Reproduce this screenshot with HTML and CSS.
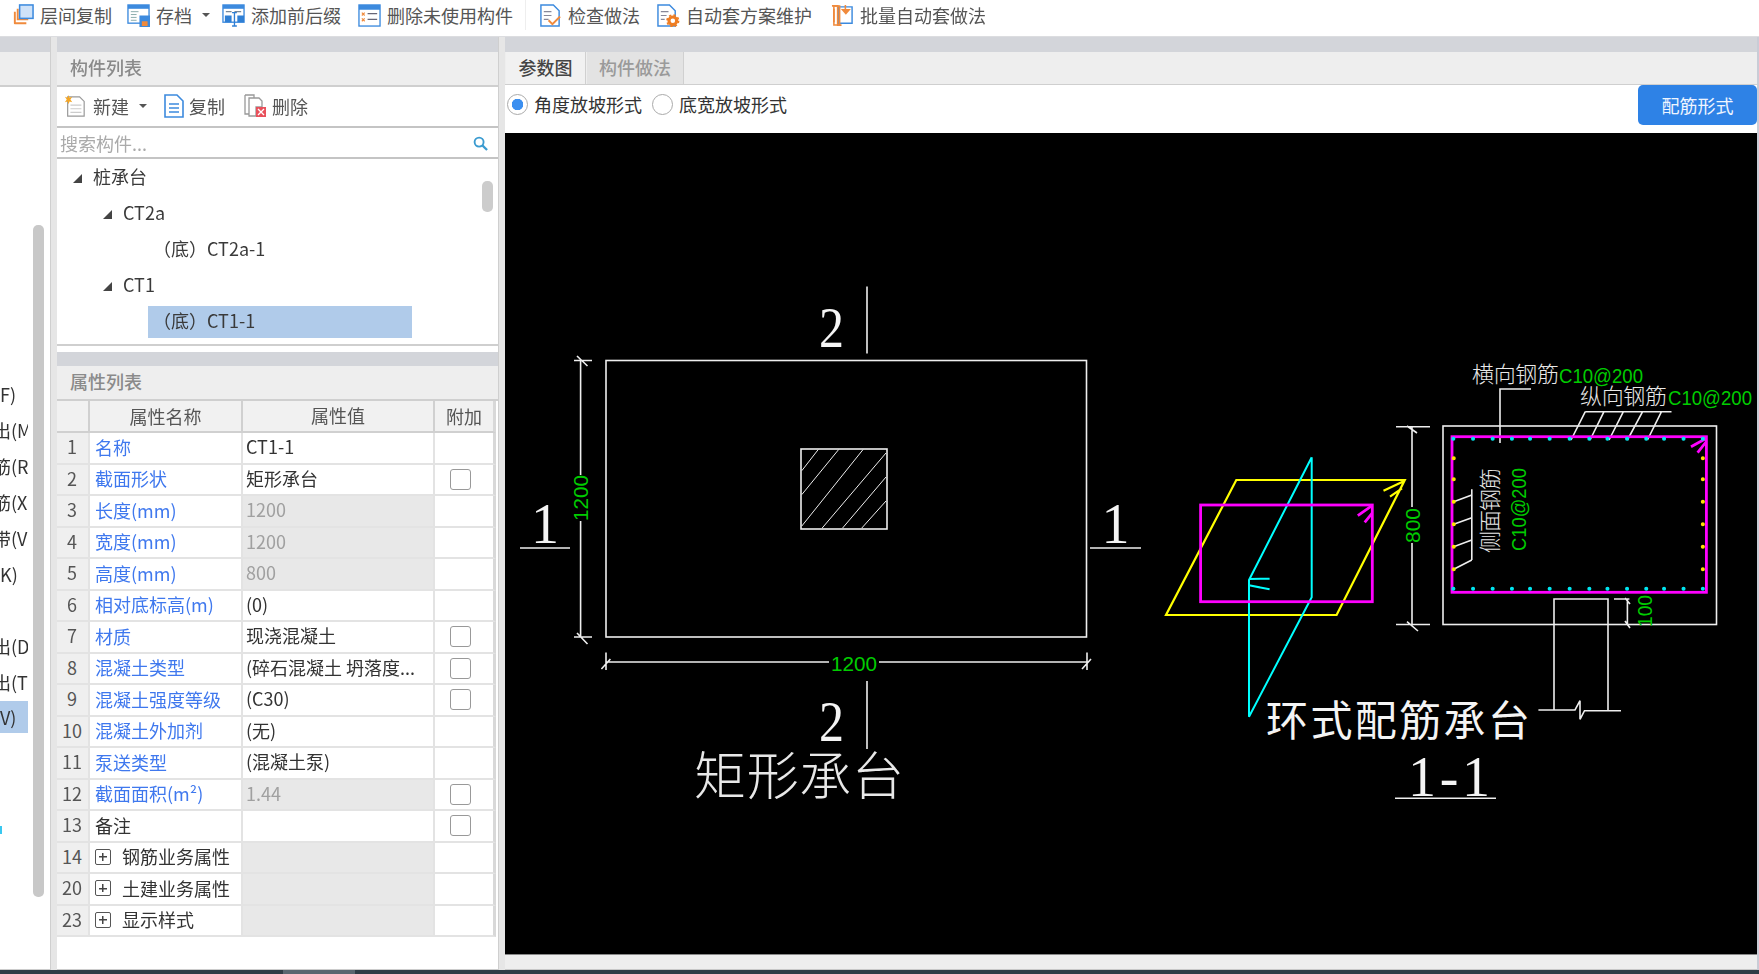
FILE: index.html
```html
<!DOCTYPE html>
<html lang="zh-CN">
<head>
<meta charset="utf-8">
<title>构件属性</title>
<link rel="stylesheet" href="styles.css">
</head>
<body>
<div class="app">
  <header class="topbar">
    <div class="tool t1">
      <svg class="ti" viewBox="0 0 24 24"><path d="M5 8H3v12a1 1 0 0 0 1 1h12v-2H5z M8 5H6v12h12v-2H8z" fill="#f08a3c"/><rect x="9" y="1" width="14" height="14" fill="#cfe2f8" stroke="#3c8ade" stroke-width="1.6"/></svg>
      <span>层间复制</span>
    </div>
    <div class="tool t2">
      <svg class="ti" viewBox="0 0 24 24"><rect x="1" y="1" width="22" height="19" fill="#fff" stroke="#3c8ade" stroke-width="1.4"/><rect x="1" y="1" width="22" height="4" fill="#3c8ade"/><path d="M4 8h8M4 11h6M4 14h6M4 17h6" stroke="#8aa" stroke-width="1"/><rect x="13" y="12" width="11" height="12" fill="#3c8ade"/><rect x="15.500" y="18" width="6" height="5" fill="#f08a3c"/></svg>
      <span>存档</span><i class="caret"></i>
    </div>
    <div class="tool t3">
      <svg class="ti" viewBox="0 0 24 24"><rect x="1" y="1" width="22" height="18" fill="#fff" stroke="#3c8ade" stroke-width="1.4"/><rect x="1" y="1" width="22" height="4" fill="#3c8ade"/><path d="M4 8h6M13 8h7" stroke="#789" stroke-width="1.2"/><rect x="3" y="12" width="7" height="7" fill="#2f7fd4"/><rect x="16" y="12" width="7" height="7" fill="#2f7fd4"/><path d="M13 9v14M10.500 9h5M10.500 23h5" stroke="#2f7fd4" stroke-width="1.4" fill="none"/></svg>
      <span>添加前后缀</span>
    </div>
    <div class="tool t4">
      <svg class="ti" viewBox="0 0 24 24"><rect x="1" y="1" width="22" height="22" fill="#fff" stroke="#3c8ade" stroke-width="1.4"/><rect x="1" y="1" width="22" height="5" fill="#3c8ade"/><path d="M4 9l3 3m0-3l-3 3M4 15l3 3m0-3l-3 3" stroke="#f08a3c" stroke-width="1.2"/><path d="M10 10h10M10 16h10" stroke="#667" stroke-width="1.2"/></svg>
      <span>删除未使用构件</span>
    </div>
    <b class="tool-sep"></b>
    <div class="tool t5">
      <svg class="ti" viewBox="0 0 24 24"><path d="M2 1h13l6 6v16H2z" fill="#fff" stroke="#3c8ade" stroke-width="1.5"/><path d="M5 8h8M5 12h8M5 16h5" stroke="#889" stroke-width="1.2"/><path d="M10 17l4 4 8-8" fill="none" stroke="#f08a3c" stroke-width="2"/></svg>
      <span>检查做法</span>
    </div>
    <div class="tool t6">
      <svg class="ti" viewBox="0 0 24 24"><path d="M1 1h12l6 6v16H1z" fill="#fff" stroke="#3c8ade" stroke-width="1.5"/><path d="M4 8h8M4 12h6M4 16h4" stroke="#889" stroke-width="1.2"/><circle cx="16.500" cy="17.500" r="4" fill="#fff" stroke="#ef7d22" stroke-width="3.200"/><circle cx="16.500" cy="17.500" r="6" fill="none" stroke="#ef7d22" stroke-width="1.800" stroke-dasharray="2.400 2.300"/></svg>
      <span>自动套方案维护</span>
    </div>
    <div class="tool t7">
      <svg class="ti" viewBox="0 0 24 24"><path d="M8 3h14v17H8z" fill="#fff" stroke="#3c8ade" stroke-width="1.500"/><path d="M1 2h6v20h4M3 5v14" fill="none" stroke="#f08a3c" stroke-width="1.800"/><path d="M3 2h6v20H3z" fill="none" stroke="#f08a3c" stroke-width="1.600"/><path d="M15 1v8M12 6l3.500 4L19 6z" fill="#f08a3c" stroke="#f08a3c" stroke-width="1.600"/></svg>
      <span>批量自动套做法</span>
    </div>
  </header>

  <div class="workspace">
    <aside class="nav">
      <div class="strip"></div>
      <div class="nav-head"></div>
      <div class="nav-body">
        <div class="nav-rows">
          <div class="nav-row"><span>F)</span></div>
          <div class="nav-row"><span class="cut">出(M</span></div>
          <div class="nav-row"><span class="cut">筋(R</span></div>
          <div class="nav-row"><span class="cut">筋(X</span></div>
          <div class="nav-row"><span class="cut">带(V</span></div>
          <div class="nav-row"><span>K)</span></div>
          <div class="nav-row"></div>
          <div class="nav-row"><span class="cut">出(D</span></div>
          <div class="nav-row"><span class="cut">出(T</span></div>
          <div class="nav-row nav-sel"><span>V)</span></div>
        </div>
        <div class="nav-thumb"></div>
        <i class="nav-dot"></i>
      </div>
    </aside>
    <div class="gutter"></div>

    <section class="mid">
      <div class="strip"></div>
      <h2 class="panel-title">构件列表</h2>
      <div class="list-tools">
        <svg class="ti-s new" viewBox="0 0 24 24"><path d="M4 2h13l5 5v16H4z" fill="#fff" stroke="#999" stroke-width="1.300"/><path d="M7 11h12M7 15h12M7 19h12" stroke="#ccc" stroke-width="1.200"/><path d="M5 0l1 3 3-1-2 3 2 3-3-1-1 3-1-3-3 1 2-3-2-3 3 1z" fill="#f5a623"/></svg>
        <span class="lt-new">新建</span><i class="caret c-new"></i>
        <svg class="ti-s copy" viewBox="0 0 20 24"><path d="M1 1h12l6 6v16H1z" fill="#fff" stroke="#3c8ade" stroke-width="1.600"/><path d="M5 10h10M5 14h10M5 18h10" stroke="#3c8ade" stroke-width="1.400"/></svg>
        <span class="lt-copy">复制</span>
        <svg class="ti-s del" viewBox="0 0 22 24"><path d="M1 1h9v3M1 1v19h4" fill="none" stroke="#999" stroke-width="1.300"/><path d="M5 4h10l3 3v6H12v9H5z" fill="#fff" stroke="#999" stroke-width="1.300"/><rect x="12" y="13" width="10" height="10" fill="#e8505b"/><path d="M14 15l6 6m0-6l-6 6" stroke="#fff" stroke-width="1.300"/></svg>
        <span class="lt-del">删除</span>
      </div>
      <div class="search">
        <span>搜索构件...</span>
        <svg class="search-ico" viewBox="0 0 16 16"><circle cx="6.500" cy="6.500" r="4.800" fill="none" stroke="#3b9bd0" stroke-width="2"/><path d="M10 10l5 5" stroke="#3b9bd0" stroke-width="2.400"/></svg>
      </div>
      <div class="tree">
        <div class="tree-row lv1"><i class="tri"></i>桩承台</div>
        <div class="tree-row lv2"><i class="tri"></i>CT2a</div>
        <div class="tree-row lv3"><span>（底）CT2a-1</span></div>
        <div class="tree-row lv2"><i class="tri"></i>CT1</div>
        <div class="tree-row lv3 sel"><span>（底）CT1-1</span></div>
        <div class="tree-thumb"></div>
      </div>
      <div class="strip strip-mid"></div>
      <h2 class="panel-title">属性列表</h2>
      <div class="props">
        <div class="pr head"><div class="n"></div><div class="k">属性名称</div><div class="v">属性值</div><div class="a">附加</div></div>
        <div class="pr"><div class="n">1</div><div class="k blue">名称</div><div class="v">CT1-1</div><div class="a"></div></div>
        <div class="pr"><div class="n">2</div><div class="k blue">截面形状</div><div class="v">矩形承台</div><div class="a"><i class="cb"></i></div></div>
        <div class="pr"><div class="n">3</div><div class="k blue">长度(mm)</div><div class="v off">1200</div><div class="a"></div></div>
        <div class="pr"><div class="n">4</div><div class="k blue">宽度(mm)</div><div class="v off">1200</div><div class="a"></div></div>
        <div class="pr"><div class="n">5</div><div class="k blue">高度(mm)</div><div class="v off">800</div><div class="a"></div></div>
        <div class="pr"><div class="n">6</div><div class="k blue">相对底标高(m)</div><div class="v">(0)</div><div class="a"></div></div>
        <div class="pr"><div class="n">7</div><div class="k blue">材质</div><div class="v">现浇混凝土</div><div class="a"><i class="cb"></i></div></div>
        <div class="pr"><div class="n">8</div><div class="k blue">混凝土类型</div><div class="v">(碎石混凝土 坍落度...</div><div class="a"><i class="cb"></i></div></div>
        <div class="pr"><div class="n">9</div><div class="k blue">混凝土强度等级</div><div class="v">(C30)</div><div class="a"><i class="cb"></i></div></div>
        <div class="pr"><div class="n">10</div><div class="k blue">混凝土外加剂</div><div class="v">(无)</div><div class="a"></div></div>
        <div class="pr"><div class="n">11</div><div class="k blue">泵送类型</div><div class="v">(混凝土泵)</div><div class="a"></div></div>
        <div class="pr"><div class="n">12</div><div class="k blue">截面面积(m²)</div><div class="v off">1.44</div><div class="a"><i class="cb"></i></div></div>
        <div class="pr"><div class="n">13</div><div class="k">备注</div><div class="v"></div><div class="a"><i class="cb"></i></div></div>
        <div class="pr"><div class="n">14</div><div class="k"><i class="plus"></i>钢筋业务属性</div><div class="v off"></div><div class="a"></div></div>
        <div class="pr"><div class="n">20</div><div class="k"><i class="plus"></i>土建业务属性</div><div class="v off"></div><div class="a"></div></div>
        <div class="pr"><div class="n">23</div><div class="k"><i class="plus"></i>显示样式</div><div class="v off"></div><div class="a"></div></div>
      </div>
    </section>
    <div class="gutter"></div>

    <main class="view">
      <div class="strip"></div>
      <div class="tabs">
        <div class="tab on">参数图</div>
        <div class="tab">构件做法</div>
      </div>
      <div class="opts">
        <label class="radio"><i class="dot on"></i>角度放坡形式</label>
        <label class="radio"><i class="dot"></i>底宽放坡形式</label>
        <button class="btn">配筋形式</button>
      </div>
      <svg class="cad" viewBox="505 133 1252 821">
        <g class="w">
          <rect x="606" y="360.500" width="480.500" height="276.500"/>
          <rect x="801" y="449" width="86" height="80"/>
          <g class="thin">
            <path d="M801.800 470.700L818.200 449.600M801.800 494.600L838.600 449.600M801.800 526L863 449.600M822.200 528L886 453M842.600 528L886 477M861.800 528L886 501"/>
          </g>
          <path d="M867 286.500V353.500M867 681V749M520 548H570M1090 548H1141"/>
          <path d="M580.600 360.500V475M580.600 521V637M574 360.500H592M574 637H592M577 356L587.500 366M577 633L587.500 644"/>
          <path d="M606 662H829M879 662H1087M606 652.500V670M1087 652.500V670M601.400 669L610.400 659M1082 669L1091 659"/>
          <rect x="1443" y="426" width="273.500" height="198.500"/>
          <path d="M1412 426.700V507M1412 543V624.500M1396 426.700H1430M1396 624.500H1430M1407 426L1417 433M1407 621.700L1418 631"/>
          <path d="M1500 443V389H1531M1585.300 411.700H1671.500M1585.300 411.700L1571 440M1604 411.700L1590 440M1623.400 411.700L1609 440M1642.600 411.700L1627.400 440M1661.500 411.700L1647.400 440"/>
          <path d="M1471.800 489.300V560M1471.800 495L1453.700 501.700M1471.800 517.700L1453.700 524.300M1471.800 540L1453.700 546.700M1471.800 560L1453.700 569.300"/>
          <path d="M1554 710V599H1608V710M1538.400 710H1575L1580 700.700V719.300L1584.500 710.700H1621"/>
          <path d="M1614 599H1629.400M1627.400 599V625M1625 598L1630 604M1625 621L1630 628"/>
          <path d="M1395 798.300H1496"/>
        </g>
        <g class="yellow">
          <path d="M1236.300 480H1404.800L1336.600 615H1166ZM1383.500 490.700L1404.800 480.700M1390 496.700L1402 488.300"/>
        </g>
        <g class="cyan">
          <path d="M1311.700 457.300V597.300L1249 716.700V580L1311.700 457.300M1249 579L1269.600 578.700M1249 585.300L1269.600 589.300"/>
        </g>
        <g class="magenta">
          <rect x="1200.600" y="505" width="171.700" height="96.700"/>
          <path d="M1357.800 515.700L1372 505.700M1364.700 522.300L1372 513.300"/>
          <rect x="1452" y="436.700" width="254.400" height="155.600"/>
          <path d="M1691 446.700L1706 438.500M1697.600 452.700L1706 442"/>
        </g>
        <g class="rebar-c">
          <path d="M1453.300 438.700h.1M1473 438.700h.1M1492.600 438.700h.1M1511.900 438.700h.1M1530 438.700h.1M1549.600 438.700h.1M1569.600 438.700h.1M1589.300 438.700h.1M1607.400 438.700h.1M1627 438.700h.1M1646.200 438.700h.1M1664 438.700h.1M1683.500 438.700h.1M1702.800 438.700h.1M1453.300 588.700h.1M1473 588.700h.1M1492.600 588.700h.1M1511.900 588.700h.1M1530 588.700h.1M1549.600 588.700h.1M1569.600 588.700h.1M1589.300 588.700h.1M1607.400 588.700h.1M1627 588.700h.1M1646.200 588.700h.1M1664 588.700h.1M1683.500 588.700h.1M1702.800 588.700h.1"/>
        </g>
        <g class="rebar-y">
          <path d="M1453.700 458.300h.1M1453.700 479.300h.1M1453.700 501.700h.1M1453.700 524.300h.1M1453.700 546.700h.1M1453.700 569.300h.1M1702.800 458.300h.1M1702.800 479.300h.1M1702.800 501.700h.1M1702.800 524.300h.1M1702.800 546.700h.1M1702.800 569.300h.1"/>
        </g>

        <text class="num" x="819" y="347" textLength="25" lengthAdjust="spacingAndGlyphs">2</text>
        <text class="num" x="819" y="741" textLength="25" lengthAdjust="spacingAndGlyphs">2</text>
        <text class="num" x="531" y="543">1</text>
        <text class="num" x="1101.500" y="543">1</text>
        <text class="num" x="1408" y="796" textLength="82">1-1</text>

        <text class="g" x="831" y="670.500" textLength="46" lengthAdjust="spacingAndGlyphs">1200</text>
        <text class="g" transform="translate(588 521) rotate(-90)" textLength="46" lengthAdjust="spacingAndGlyphs">1200</text>
        <text class="g" transform="translate(1420 543) rotate(-90)" textLength="35" lengthAdjust="spacingAndGlyphs">800</text>
        <text class="g" transform="translate(1652 627) rotate(-90)" textLength="32" lengthAdjust="spacingAndGlyphs">100</text>
        <text class="g" x="1559" y="383" textLength="84" lengthAdjust="spacingAndGlyphs">C10@200</text>
        <text class="g" x="1668" y="405" textLength="84" lengthAdjust="spacingAndGlyphs">C10@200</text>
        <text class="g" transform="translate(1526 551) rotate(-90)" textLength="83" lengthAdjust="spacingAndGlyphs">C10@200</text>

        <text class="cn" x="1472" y="382" textLength="87">横向钢筋</text>
        <text class="cn" x="1580" y="404" textLength="87">纵向钢筋</text>
        <text class="cn" transform="translate(1498 553) rotate(-90)" textLength="85">侧面钢筋</text>
        <text class="cn title" x="694" y="795" textLength="210">矩形承台</text>
        <text class="cn title2" x="1266" y="736" textLength="264">环式配筋承台</text>
      </svg>
      <div class="view-foot"></div>
    </main>
    <div class="edge"></div>
  </div>

  <footer class="task"><i></i></footer>
</div>
</body>
</html>
```
FILE: styles.css
```css
* { box-sizing: border-box; }
html, body { margin: 0; padding: 0; }
body {
  width: 1759px;
  height: 974px;
  overflow: hidden;
  background: #fff;
  font-family: "Noto Sans CJK SC", "Noto Sans", sans-serif;
  font-size: 18px;
  color: #3a3a3a;
}
i { display: block; font-style: normal; }
.app { display: flex; flex-direction: column; height: 974px; filter: blur(0.5px); }

/* top bar */
.topbar {
  height: 37px;
  flex: none;
  display: flex;
  align-items: flex-start;
  background: #fff;
  border-bottom: 1px solid #dcdde0;
  color: #555;
  padding-left: 11px;
}
.tool { display: flex; align-items: center; height: 30px; line-height: 30px; white-space: nowrap; }
.tool span { display: block; }
.ti { width: 23px; height: 23px; flex: none; margin-right: 6px; }
.t2 { margin-left: 15px; }
.t3 { margin-left: 12px; }
.t4 { margin-left: 17px; }
.tool-sep { width: 1px; height: 30px; margin: 0 13px 0 12px; background: #eee; }
.t6 { margin-left: 17px; }
.t7 { margin-left: 19px; }
.caret {
  width: 0; height: 0;
  border: 4px solid transparent;
  border-top: 4.500px solid #555;
  border-bottom: 0;
}
.t2 .caret { margin-left: 10px; margin-right: 0; }

/* columns */
.workspace { flex: 1; display: flex; min-height: 0; }
.strip { height: 15px; background: #d3d5da; flex: none; }
.gutter { width: 7px; flex: none; background: #e6e6e6; border-left: 1px solid #cfcfcf; }
.edge { width: 2px; flex: none; background: #c9ccd6; }

.nav { width: 50px; flex: none; display: flex; flex-direction: column; }
.nav-head { height: 35px; flex: none; background: #eee; border-bottom: 2px solid #cfcfcf; }
.nav-body { flex: 1; position: relative; background: #fff; border-bottom: 1px solid #ccc; }
.nav-rows { padding-top: 290px; width: 28px; }
.nav-row { height: 36px; line-height: 35px; overflow: hidden; white-space: nowrap; font-size: 18px; color: #333; }
.nav-row .cut { display: block; margin-left: -7px; }
.nav-sel { height: 32px; margin-top: 0; background: #b0cbea; line-height: 32px; }
.nav-thumb { position: absolute; left: 33px; top: 138px; width: 11px; height: 672px; border-radius: 5px; background: #c8c8c8; }
.nav-dot { position: absolute; left: 0; top: 739px; width: 2px; height: 8px; background: #39c8f0; }

/* middle */
.mid { width: 441px; flex: none; display: flex; flex-direction: column; background: #fff; border-bottom: 1px solid #ccc; }
.panel-title {
  margin: 0;
  height: 35px;
  flex: none;
  padding-left: 13px;
  background: #eee;
  border-bottom: 2px solid #cfcfcf;
  font-size: 18px;
  font-weight: 500;
  line-height: 31px;
  color: #8a8a8a;
}
.list-tools {
  height: 41px;
  flex: none;
  display: flex;
  align-items: center;
  padding: 0 0 2px 7px;
  border-bottom: 2px solid #c4c4c4;
  color: #555;
}
.ti-s { width: 22px; height: 24px; flex: none; }
.lt-new { margin-left: 7px; }
.c-new { margin-left: 10px; }
.copy { width: 20px; margin-left: 17px; }
.lt-copy { margin-left: 5px; }
.del { margin-left: 19px; }
.lt-del { margin-left: 6px; }
.search {
  height: 30px;
  flex: none;
  display: flex;
  align-items: center;
  justify-content: space-between;
  padding: 0 10px 0 3px;
  border-bottom: 2px solid #c4c4c4;
  color: #aaa;
  margin-top: 1px;
}
.search-ico { width: 15px; height: 15px; }
.tree { position: relative; height: 187px; flex: none; padding-top: 1px; border-bottom: 2px solid #cfcfcf; color: #3a3a3a; }
.tree-row { height: 36px; line-height: 32px; display: flex; align-items: flex-start; white-space: nowrap; }
.tri {
  width: 0; height: 0;
  margin: 13.5px 11px 0 0;
  border-left: 9px solid transparent;
  border-bottom: 9px solid #444;
}
.lv1 { padding-left: 16px; }
.lv2 { padding-left: 46px; }
.lv3 { padding-left: 91px; }
.lv3 span { display: block; width: 264px; height: 32px; line-height: 28px; text-indent: 5px; margin-top: 2px; }
.sel span { background: #b0cbea; }
.tree-thumb { position: absolute; left: 425px; top: 22px; width: 11px; height: 31px; border-radius: 5px; background: #ccc; }
.strip-mid { margin-top: 6px; height: 14px; }

.props { flex: 1; }
.pr {
  display: grid;
  grid-template-columns: 33px 153px 192px 61px;
  height: 31.5px;
  line-height: 27px;
}
.pr > div { border-right: 2px solid #e3e3e3; border-bottom: 2px solid #e3e3e3; white-space: nowrap; overflow: hidden; }
.n { background: #efefef; text-align: center; color: #555; padding-right: 1px; }
.k { padding-left: 5px; color: #333; display: flex; align-items: center; padding-bottom: 1px; }
.blue { color: #3f78ee; }
.v { padding-left: 3px; color: #333; }
.off { background: #e8e8e8; color: #a0a0a0; }
.a { display: flex; align-items: center; justify-content: center; padding-right: 8px; }
.pr > .a { border-right: 3px solid #d8d8d8; }
.head { height: 32px; line-height: 28px; }
.head > div { background: #f1f1f1; color: #555; text-align: center; border-right-color: #d0d0d0; border-bottom-color: #d0d0d0; justify-content: center; padding: 0; }
.cb { width: 21px; height: 21px; background: #fff; border: 1.500px solid #999; border-radius: 3px; }
.plus {
  width: 16px; height: 16px;
  margin-right: 11px;
  flex: none;
  border: 1.500px solid #555;
  border-radius: 2px;
  background: linear-gradient(#444, #444) center / 8px 1.500px no-repeat, linear-gradient(#444, #444) center / 1.500px 8px no-repeat;
}

/* right */
.view { width: 1252px; flex: none; display: flex; flex-direction: column; background: #fff; }
.tabs { height: 33px; flex: none; display: flex; background: #eee; border-bottom: 1px solid #cfcfcf; padding-left: 1px; }
.tab {
  width: 97px;
  line-height: 31px;
  text-align: center;
  font-weight: 500;
  color: #9a9a9a;
  background: #e3e3e3;
  border-right: 1px solid #d0d0d0;
}
.tab.on { width: 80px; background: #f1f1f1; color: #444; margin-right: 1px; border-left: 0; }
.opts { height: 48px; flex: none; display: flex; padding-left: 2px; position: relative; color: #333; }
.radio { display: flex; align-items: center; height: 38px; margin-right: 10px; line-height: 38px; }
.dot { width: 21px; height: 21px; margin-right: 6px; border: 1.500px solid #aaa; border-radius: 50%; background: #fff; }
.dot.on { background: radial-gradient(circle, #3b8ff0 0 5.500px, #fff 6px); }
.btn {
  margin: 0 0 0 auto;
  width: 119px;
  height: 40px;
  border: 0;
  border-radius: 5px;
  background: #2e82e6;
  color: #eef5ff;
  font: inherit;
  padding: 0;
}
.cad { display: block; width: 1252px; height: 821px; flex: none; background: #000; }
.view-foot { flex: 1; background: #eee; border-top: 1px solid #888; border-bottom: 1px solid #c8c8c8; }

/* drawing */
.cad rect, .cad path { fill: none; }
.w { stroke: #eee; stroke-width: 1.600; }
.thin { stroke-width: 1; }
.yellow { stroke: #ff0; stroke-width: 2.200; }
.cyan { stroke: #0ff; stroke-width: 2; }
.magenta { stroke: #f0f; stroke-width: 2.800; }
.rebar-c { stroke: #00e5f0; stroke-width: 4; stroke-linecap: round; }
.rebar-y { stroke: #ffe000; stroke-width: 4; stroke-linecap: round; }
.num { font-family: "Liberation Serif", serif; font-size: 56px; fill: #f4f4f4; }
.g { font-family: "Liberation Sans", sans-serif; font-size: 20px; fill: #00cc00; }
.cn { font-family: "Noto Sans CJK SC", sans-serif; font-size: 22px; font-weight: 300; fill: #e8e8e8; }
.title { font-size: 52px; }
.title2 { font-size: 42px; font-weight: 400; fill: #f4f4f4; }

.task { height: 4px; flex: none; background: #2f3c46; position: relative; }
.task i { position: absolute; left: 283px; top: 0; width: 72px; height: 4px; background: #5a6670; }
```
